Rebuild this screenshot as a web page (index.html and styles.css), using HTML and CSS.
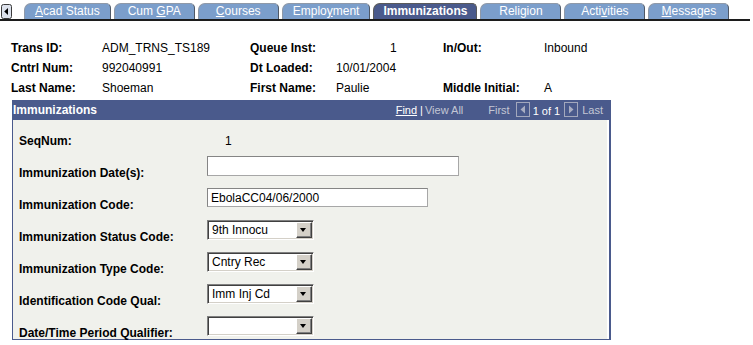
FILE: index.html
```html
<!DOCTYPE html>
<html lang="en">
<head>
    <meta charset="UTF-8">
    <title>Immunizations</title>
    <link rel="stylesheet" href="styles.css">
</head>
<body>
    <div class="tabbar">
        <span class="tab-prev">
            <svg width="11" height="15" viewBox="0 0 11 15">
                <rect x="0.5" y="0.5" width="10" height="14" rx="2" fill="#dde2ec" stroke="#3a3a3a"/>
                <polygon points="7,4 7,11 3.2,7.5" fill="#000"/>
            </svg>
        </span>
        <div class="tabs">
            <span class="tab"><u>A</u>cad Status</span>
            <span class="tab">Cum <u>G</u>PA</span>
            <span class="tab"><u>C</u>ourses</span>
            <span class="tab">Emplo<u>y</u>ment</span>
            <span class="tab active">Immunizations</span>
            <span class="tab">Reli<u>g</u>ion</span>
            <span class="tab">Acti<u>v</u>ities</span>
            <span class="tab"><u>M</u>essages</span>
        </div>
    </div>

    <div class="info">
        <span class="lbl">Trans ID:</span>
        <span>ADM_TRNS_TS189</span>
        <span class="lbl">Queue Inst:</span>
        <span class="num">1</span>
        <span class="lbl">In/Out:</span>
        <span>Inbound</span>

        <span class="lbl">Cntrl Num:</span>
        <span>992040991</span>
        <span class="lbl">Dt Loaded:</span>
        <span>10/01/2004</span>
        <span></span>
        <span></span>

        <span class="lbl">Last Name:</span>
        <span>Shoeman</span>
        <span class="lbl">First Name:</span>
        <span>Paulie</span>
        <span class="lbl">Middle Initial:</span>
        <span>A</span>
    </div>

    <div class="grid-box">
        <div class="grid-head">
            <span class="grid-title">Immunizations</span>
            <div class="grid-nav">
                <a class="nav-link">Find</a>
                <span class="sep">|</span>
                <span class="dim view-all">View All</span>
                <span class="dim first">First</span>
                <svg class="nav-btn" width="14" height="15" viewBox="0 0 14 15">
                    <rect x="0.5" y="0.5" width="13" height="14" fill="none" stroke="#a3a8bd"/>
                    <polygon points="9,3.5 9,11.5 4.5,7.5" fill="#a9aec2"/>
                </svg>
                <span class="count">1 of 1</span>
                <svg class="nav-btn" width="14" height="15" viewBox="0 0 14 15">
                    <rect x="0.5" y="0.5" width="13" height="14" fill="none" stroke="#a3a8bd"/>
                    <polygon points="5,3.5 5,11.5 9.5,7.5" fill="#a9aec2"/>
                </svg>
                <span class="dim last">Last</span>
            </div>
        </div>
        <div class="grid-body">
            <div class="form">
                <span class="flbl">SeqNum:</span>
                <span class="seq">1</span>

                <span class="flbl">Immunization Date(s):</span>
                <input class="txt txt-wide" type="text" value="">

                <span class="flbl">Immunization Code:</span>
                <input class="txt txt-mid" type="text" value="EbolaCC04/06/2000">

                <span class="flbl">Immunization Status Code:</span>
                <div class="dd"><span class="dd-val">9th Innocu</span><span class="dd-btn"></span></div>

                <span class="flbl">Immunization Type Code:</span>
                <div class="dd"><span class="dd-val">Cntry Rec</span><span class="dd-btn"></span></div>

                <span class="flbl">Identification Code Qual:</span>
                <div class="dd"><span class="dd-val">Imm Inj Cd</span><span class="dd-btn"></span></div>

                <span class="flbl">Date/Time Period Qualifier:</span>
                <div class="dd"><span class="dd-val"></span><span class="dd-btn"></span></div>
            </div>
        </div>
    </div>
</body>
</html>
```

FILE: styles.css
```css
body {
    margin: 0;
    background: #fff;
    font-family: "Liberation Sans", Arial, sans-serif;
    font-size: 12px;
    color: #000;
}

/* tab strip */
.tabbar {
    display: flex;
    align-items: flex-end;
    width: 750px;
    height: 16px;
    padding-top: 3px;
    border-bottom: 2px solid #1c1c1c;
}
.tab-prev {
    display: flex;
    align-self: flex-start;
    margin: 1px 12px 0 1px;
}
.tab-prev svg {
    display: block;
}
.tabs {
    display: flex;
    gap: 3px;
}
.tab {
    box-sizing: border-box;
    min-width: 81px;
    height: 16px;
    padding: 0 10px;
    line-height: 15px;
    text-align: center;
    color: #fff;
    background: #7b9ecb;
    border: 1px solid #8f99a8;
    border-right-color: #4f5866;
    border-bottom: none;
    border-radius: 7px 5px 0 0;
}
.tab u {
    text-decoration: underline;
}
.tab.active {
    background: #4a5a8c;
    font-weight: bold;
    border-color: #5a5a5a;
    padding: 0 9px;
}

/* key fields */
.info {
    display: grid;
    grid-template-columns: 91px 148px 86px 107px 101px auto;
    grid-auto-rows: 20px;
    line-height: 20px;
    margin: 17px 0 0 11px;
}
.info .lbl {
    font-weight: bold;
}
.info .num {
    padding-left: 54px;
}

/* scroll area */
.grid-box {
    width: 599px;
    margin: 2px 0 0 12px;
}
.grid-head {
    display: flex;
    justify-content: space-between;
    align-items: center;
    height: 20px;
    padding: 0 8px 0 1px;
    background: #4a5a8c;
    color: #fff;
}
.grid-title {
    font-weight: bold;
}
.grid-nav {
    display: flex;
    align-items: center;
    font-size: 11px;
}
.nav-link {
    color: #fff;
    text-decoration: underline;
}
.sep {
    margin-left: 3px;
}
.dim {
    color: #c3c7d4;
}
.view-all {
    margin-left: 2px;
}
.first {
    margin-left: 25px;
}
.nav-btn {
    display: block;
    margin: -2px 0 0 6px;
}
.count {
    margin: 2px 4px 0 3px;
}
.count + .nav-btn {
    margin-left: 0;
}
.last {
    margin-left: 4px;
}
.grid-body {
    background: #fff;
    border: 1px solid #4a5a8c;
    border-width: 0 2px 1px 1px;
}
.form {
    display: grid;
    grid-template-columns: 188px auto;
    grid-template-rows: repeat(6, 32px) 20px;
    align-items: start;
    margin-right: 2px;
    padding: 4px 0 3px 6px;
    background: #f0f1ec;
}
.flbl {
    font-weight: bold;
    line-height: 14px;
    padding-top: 10px;
}
.seq {
    line-height: 14px;
    padding: 10px 0 0 18px;
}
.txt {
    box-sizing: border-box;
    height: 20px;
    margin: 0;
    padding: 0 3px;
    font-family: inherit;
    font-size: 12px;
    color: #000;
    background: #fff;
    border: 1px solid #a7a7a7;
    border-top-color: #858585;
    border-left-color: #858585;
    outline: none;
}
.txt-wide {
    width: 252px;
}
.txt-mid {
    width: 221px;
    height: 19px;
}
.dd {
    box-sizing: border-box;
    display: flex;
    width: 107px;
    height: 20px;
    padding: 1px;
    background: #fff;
    border: 1px solid;
    border-color: #808080 #fff #fff #808080;
    box-shadow: inset 1px 1px 0 #404040, inset -1px -1px 0 #d4d0c8;
}
.dd-val {
    flex: 1;
    padding-left: 3px;
    line-height: 16px;
}
.dd-btn {
    position: relative;
    box-sizing: border-box;
    width: 16px;
    height: 16px;
    background: #d4d0c8;
    border: 1px solid;
    border-color: #fff #404040 #404040 #fff;
    box-shadow: inset -1px -1px 0 #808080;
}
.dd-btn::after {
    content: "";
    position: absolute;
    left: 3px;
    top: 5px;
    border-style: solid;
    border-width: 4px 3.5px 0 3.5px;
    border-color: #000 transparent transparent transparent;
}
```
